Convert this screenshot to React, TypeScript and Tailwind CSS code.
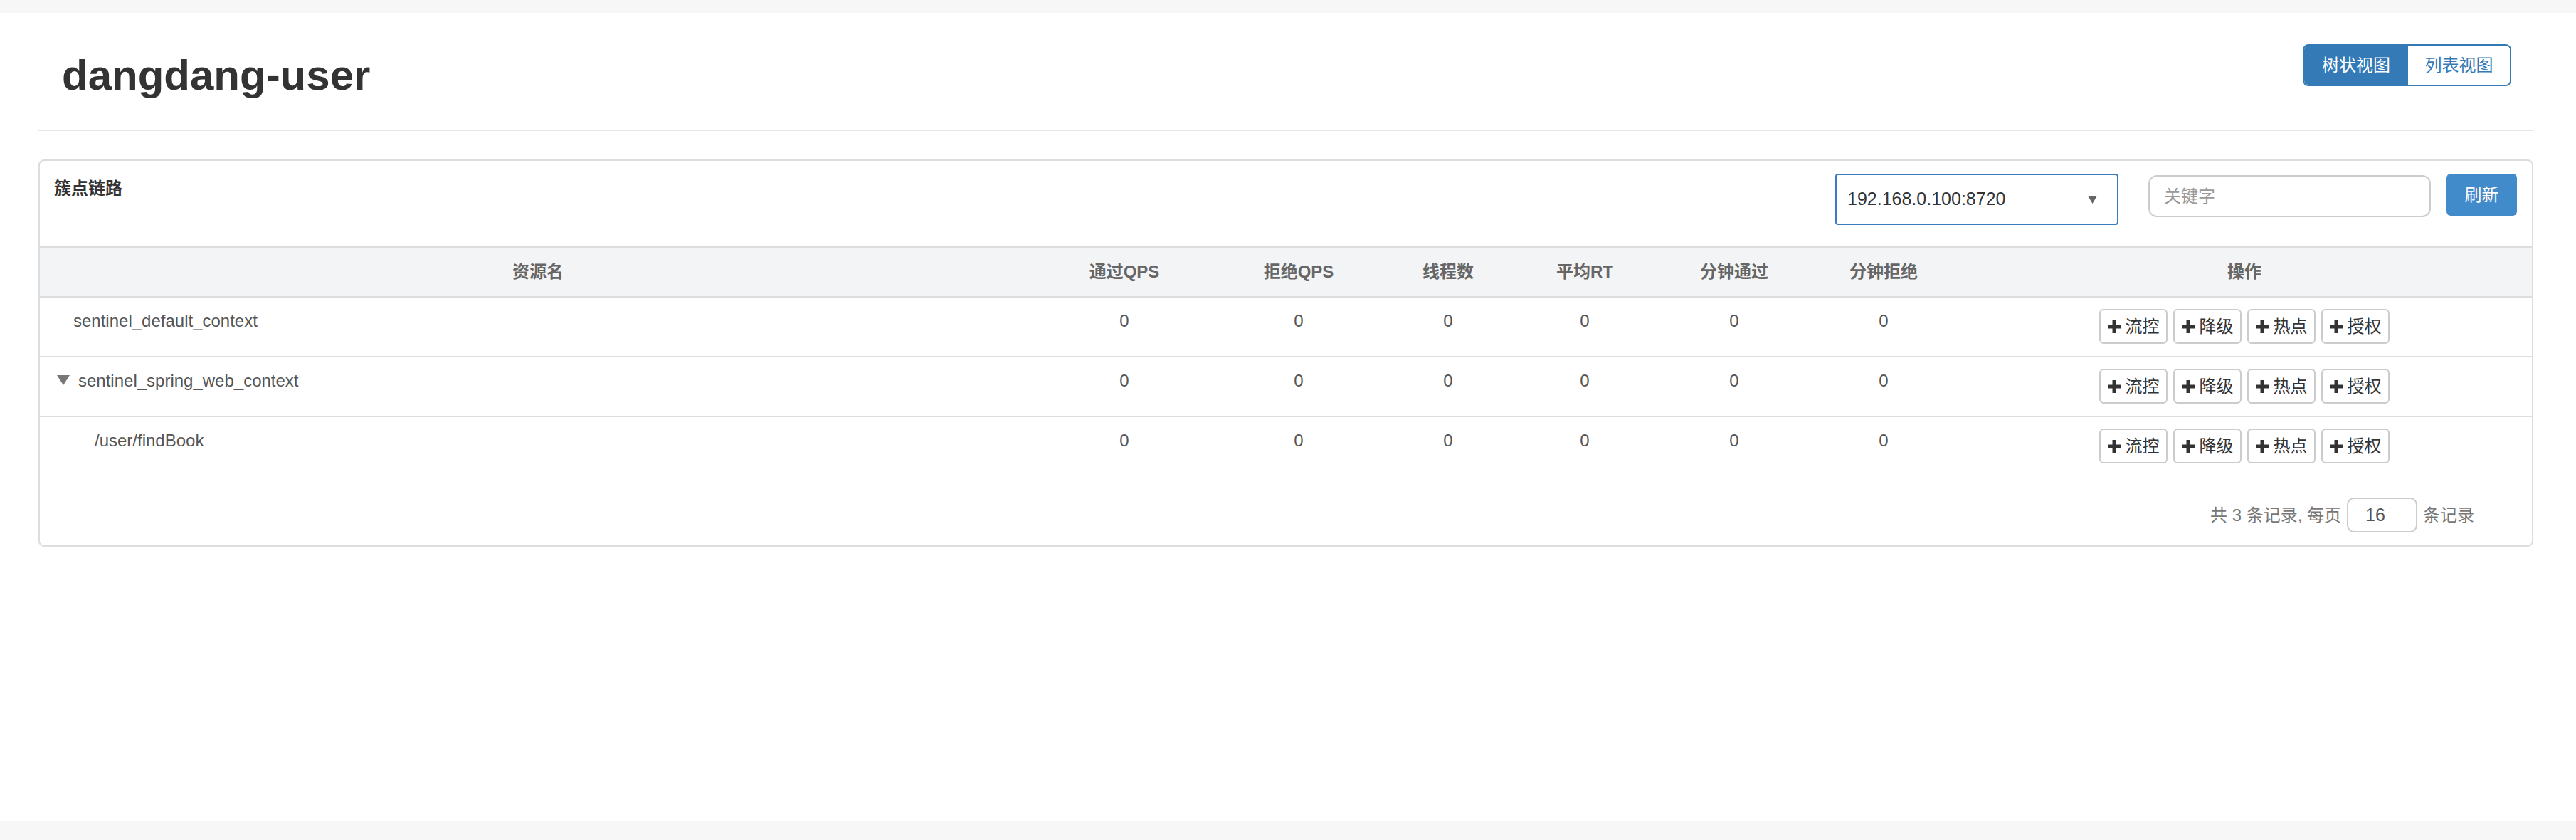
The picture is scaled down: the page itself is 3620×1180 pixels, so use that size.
import React from 'react';

const font = "font-['Liberation_Sans','Noto_Sans_CJK_SC',sans-serif]";

const rows = [
  { name: 'sentinel_default_context', level: 0, toggle: false },
  { name: 'sentinel_spring_web_context', level: 0, toggle: true },
  { name: '/user/findBook', level: 1, toggle: false },
];

const cols = ['资源名', '通过QPS', '拒绝QPS', '线程数', '平均RT', '分钟通过', '分钟拒绝', '操作'];
const grid = 'grid grid-cols-[1400px_248px_242px_178px_206px_214px_206px_1fr]';

const Plus = () => (
  <svg width="18" height="18" viewBox="0 0 18 18" className="shrink-0">
    <rect x="6.5" y="0" width="5" height="18" fill="#333" />
    <rect x="0" y="6.5" width="18" height="5" fill="#333" />
  </svg>
);

const OpButton = ({ label }: { label: string }) => (
  <button className="flex h-[49px] w-[96px] items-center justify-center gap-[7px] rounded-[6px] border-2 border-[#cccccc] bg-white text-[24px] leading-none text-[#333]">
    <Plus />
    <span>{label}</span>
  </button>
);

export default function App() {
  return (
    <div className={`${font} min-h-[1180px] bg-white`}>
      <div className="h-[18px] bg-[#f7f7f7]" />
      <div className="h-[1135px] pl-[54px] pr-[60px]">
        {/* page header */}
        <div className="flex h-[164px] items-start justify-between">
          <h1 className="mt-[55px] pl-[33px] text-[60px] font-bold leading-[66px] text-[#333]">dangdang-user</h1>
          <div className="mr-[31px] mt-[44px] flex h-[59px] overflow-hidden rounded-[8px] border-2 border-[#337ab7] text-[24px]">
            <button className="w-[146px] bg-[#337ab7] text-white">树状视图</button>
            <button className="w-[143px] bg-white text-[#337ab7]">列表视图</button>
          </div>
        </div>
        <div className="border-t-2 border-[#e5e5e5]" />

        {/* panel */}
        <div className="mt-[40px] h-[544px] rounded-[8px] border-2 border-[#dddddd]">
          <div className="flex h-[120px] items-start">
            <div className="pl-[20px] pt-[22px] text-[24px] font-bold leading-[34px] text-[#333]">簇点链路</div>
            <div className="ml-auto flex items-start pr-[21px] pt-[18px]">
              <div className="flex h-[72px] w-[398px] items-center justify-between rounded-[4px] border-2 border-[#3a7dbf] pl-[15px] pr-[28px] text-[25px] text-[#333]">
                <span>192.168.0.100:8720</span>
                <svg width="13" height="11" viewBox="0 0 13 11">
                  <polygon points="0,0 13,0 6.5,11" fill="#666" />
                </svg>
              </div>
              <div className="ml-[42px] mt-[2px] flex h-[59px] w-[397px] items-center rounded-[12px] border-2 border-[#cccccc] pl-[20px] text-[24px] text-[#999]">
                关键字
              </div>
              <button className="ml-[22px] h-[59px] w-[99px] rounded-[6px] bg-[#428bca] text-[24px] text-white">刷新</button>
            </div>
          </div>

          {/* table header */}
          <div className={`${grid} h-[72px] items-center border-y-2 border-[#dddddd] bg-[#f3f4f6] text-center text-[24px] font-bold text-[#666]`}>
            {cols.map((c) => (
              <div key={c}>{c}</div>
            ))}
          </div>

          {/* rows */}
          {rows.map((r, i) => (
            <div
              key={r.name}
              className={`${grid} text-[24px] leading-[34px] text-[#555] ${i < rows.length - 1 ? 'h-[84px] border-b-2 border-[#dddddd]' : 'h-[82px]'}`}
            >
              <div className={`flex items-start pt-[16px] ${r.toggle ? 'pl-[24px]' : r.level ? 'pl-[77px]' : 'pl-[47px]'}`}>
                {r.toggle && (
                  <svg width="18" height="14" viewBox="0 0 18 14" className="mr-[12px] mt-[9px]">
                    <polygon points="0,0 18,0 9,14" fill="#777" />
                  </svg>
                )}
                <span>{r.name}</span>
              </div>
              {[0, 1, 2, 3, 4, 5].map((k) => (
                <div key={k} className="pt-[16px] text-center">0</div>
              ))}
              <div className="flex items-start justify-center gap-[8px] pt-[16px]">
                {['流控', '降级', '热点', '授权'].map((b) => (
                  <OpButton key={b} label={b} />
                ))}
              </div>
            </div>
          ))}

          {/* pagination */}
          <div className="flex items-center justify-end gap-[8px] pr-[81px] pt-[31px] text-[24px] text-[#777]">
            <span>共 3 条记录, 每页</span>
            <div className="flex h-[49px] w-[99px] items-center rounded-[10px] border-2 border-[#cccccc] pl-[24px] text-[25px] text-[#555]">16</div>
            <span>条记录</span>
          </div>
        </div>
      </div>
      <div className="h-[27px] bg-[#f7f7f7]" />
    </div>
  );
}
